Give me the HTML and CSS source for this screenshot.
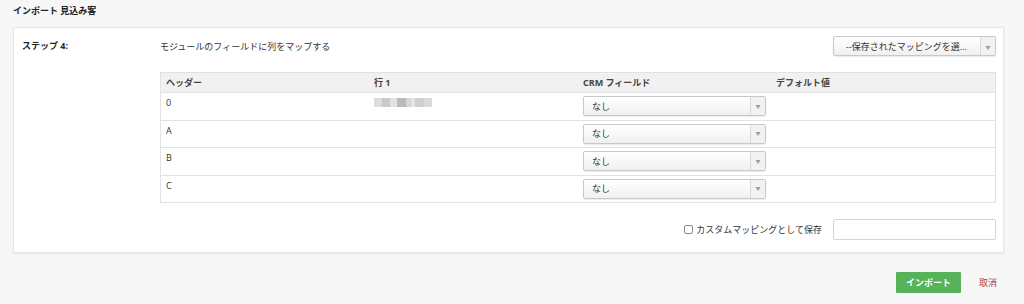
FILE: index.html
```html
<!DOCTYPE html>
<html lang="ja">
<head>
  <meta charset="UTF-8">
  <title>インポート 見込み客</title>
  <link rel="stylesheet" href="styles.css">
</head>
<body>
  <h1 class="page-title">インポート 見込み客</h1>

  <div class="card">
    <div class="step-label">ステップ 4:</div>
    <div class="step-body">
      <div class="step-head">
        <span>モジュールのフィールドに列をマップする</span>
        <div class="select saved">
          <span class="select-text">--保存されたマッピングを選...</span>
          <span class="select-arrow">▼</span>
        </div>
      </div>

      <table class="map-table">
        <thead>
          <tr>
            <th class="col-head">ヘッダー</th>
            <th class="col-row">行 1</th>
            <th class="col-crm">CRM フィールド</th>
            <th>デフォルト値</th>
          </tr>
        </thead>
        <tbody>
          <tr>
            <td>0</td>
            <td><span class="blurred"></span></td>
            <td><div class="select"><span class="select-text">なし</span><span class="select-arrow">▼</span></div></td>
            <td></td>
          </tr>
          <tr>
            <td>A</td>
            <td></td>
            <td><div class="select"><span class="select-text">なし</span><span class="select-arrow">▼</span></div></td>
            <td></td>
          </tr>
          <tr>
            <td>B</td>
            <td></td>
            <td><div class="select"><span class="select-text">なし</span><span class="select-arrow">▼</span></div></td>
            <td></td>
          </tr>
          <tr>
            <td>C</td>
            <td></td>
            <td><div class="select"><span class="select-text">なし</span><span class="select-arrow">▼</span></div></td>
            <td></td>
          </tr>
        </tbody>
      </table>

      <div class="save-row">
        <label class="save-label"><span class="checkbox"></span>カスタムマッピングとして保存</label>
        <input type="text" class="save-input">
      </div>
    </div>
  </div>

  <div class="actions">
    <button class="btn-import">インポート</button>
    <a class="cancel" href="#">取消</a>
  </div>
</body>
</html>
```

FILE: styles.css
```css
body {
  margin: 0;
  padding: 0 20px 0 13px;
  background: #f7f7f7;
  color: #333;
  font-family: 'Open Sans', 'Noto Sans CJK JP', sans-serif;
  font-size: 9px;
}
.page-title {
  margin: 0;
  height: 27px;
  line-height: 21px;
  font-size: 9px;
  font-weight: bold;
  color: #222;
}
.card {
  display: grid;
  grid-template-columns: 138px 1fr;
  background: #fff;
  border: 1px solid #e6e6e6;
  box-shadow: 0 1px 2px rgba(0, 0, 0, 0.06);
  padding: 8px 7px 12px 8px;
}
.step-label {
  font-weight: bold;
  color: #222;
  line-height: 20px;
}
.step-head {
  display: flex;
  justify-content: space-between;
  align-items: center;
  height: 20px;
}
.select {
  display: flex;
  align-items: center;
  height: 18px;
  border: 1px solid #c8c8c8;
  border-radius: 2px;
  background: linear-gradient(#fff, #f0f0f0);
  box-shadow: 0 1px 1px rgba(0, 0, 0, 0.08);
}
.select-text {
  flex: 1;
  padding-left: 8px;
  white-space: nowrap;
  overflow: hidden;
}
.select-arrow {
  width: 14px;
  height: 100%;
  border-left: 1px solid #d8d8d8;
  background: #f2f2f2;
  color: #999;
  font-size: 5px;
  display: flex;
  align-items: center;
  justify-content: center;
}
.saved {
  width: 161px;
}
.saved .select-text {
  padding-left: 12px;
}
.map-table {
  width: 100%;
  margin-top: 16px;
  border-collapse: collapse;
  border: 1px solid #e2e2e2;
}
.map-table th {
  background: #f1f1f1;
  text-align: left;
  font-weight: bold;
  color: #444;
  height: 19px;
  padding: 0 5px;
}
.map-table td {
  border-top: 1px solid #e2e2e2;
  height: 23.5px;
  padding: 3px 5px 0;
  vertical-align: top;
  line-height: 13px;
}
.col-head {
  width: 198px;
}
.col-row {
  width: 199px;
}
.col-crm {
  width: 182px;
}
.map-table .select {
  width: 181px;
}
.blurred {
  display: block;
  width: 58px;
  height: 9px;
  margin-top: 2px;
  background: linear-gradient(90deg, #ddd 0 14%, #c9c9c9 14% 28%, #e2e2e2 28% 40%, #bbb 40% 55%, #d6d6d6 55% 64%, #e4e4e4 64% 70%, #cfcfcf 70% 86%, #dadada 86% 100%);
}
.save-row {
  display: flex;
  justify-content: flex-end;
  align-items: center;
  gap: 11px;
  margin-top: 16px;
}
.save-label {
  display: flex;
  align-items: center;
  gap: 3px;
  color: #333;
}
.checkbox {
  width: 7px;
  height: 7px;
  border: 1px solid #888;
  border-radius: 2px;
  background: #fff;
}
.save-input {
  width: 163px;
  box-sizing: border-box;
  height: 21px;
  border: 1px solid #d4d4d4;
  border-radius: 2px;
  margin: 0;
}
.actions {
  display: flex;
  justify-content: flex-end;
  align-items: center;
  gap: 18px;
  margin-top: 19px;
  padding-right: 7px;
}
.btn-import {
  width: 65px;
  height: 21px;
  border: none;
  border-radius: 1px;
  background: #57b35a;
  color: #fff;
  font-family: inherit;
  font-size: 9px;
  font-weight: bold;
  padding: 0;
}
.cancel {
  color: #b04040;
  text-decoration: none;
}
```
